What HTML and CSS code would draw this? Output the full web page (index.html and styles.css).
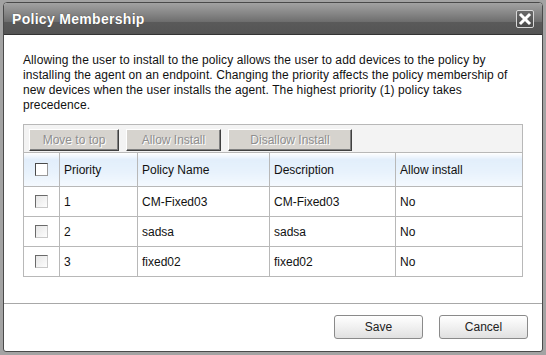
FILE: index.html
```html
<!DOCTYPE html>
<html>
<head>
<meta charset="utf-8">
<link rel="stylesheet" href="styles.css">
</head>
<body>
<div class="dialog">
  <div class="titlebar">
    <span class="title">Policy Membership</span>
    <span class="close">
      <svg width="16" height="16" viewBox="0 0 16 16"><path d="M4 4 L12 12 M12 4 L4 12" stroke="#fff" stroke-width="3" stroke-linecap="square"/></svg>
    </span>
  </div>
  <div class="content">
    <p class="intro">Allowing the user to install to the policy allows the user to add devices to the policy by installing the agent on an endpoint. Changing the priority affects the policy membership of new devices when the user installs the agent. The highest priority (1) policy takes precedence.</p>
    <div class="grid">
      <div class="toolbar">
        <button class="tbtn b1">Move to top</button>
        <button class="tbtn b2">Allow Install</button>
        <button class="tbtn b3">Disallow Install</button>
      </div>
      <table class="tbl">
        <thead>
          <tr class="head">
            <th class="c0"><span class="cb"></span></th>
            <th class="c1">Priority</th>
            <th class="c2">Policy Name</th>
            <th class="c3">Description</th>
            <th class="c4">Allow install</th>
          </tr>
        </thead>
        <tbody>
          <tr><td class="c0"><span class="cb"></span></td><td>1</td><td>CM-Fixed03</td><td>CM-Fixed03</td><td>No</td></tr>
          <tr><td class="c0"><span class="cb"></span></td><td>2</td><td>sadsa</td><td>sadsa</td><td>No</td></tr>
          <tr><td class="c0"><span class="cb"></span></td><td>3</td><td>fixed02</td><td>fixed02</td><td>No</td></tr>
        </tbody>
      </table>
    </div>
  </div>
  <div class="footer">
    <button class="fbtn">Save</button>
    <button class="fbtn">Cancel</button>
  </div>
</div>
</body>
</html>
```
FILE: styles.css
```css
html, body {
  margin: 0;
  padding: 0;
  background: #a3a3a3;
  width: 546px;
  height: 355px;
  overflow: hidden;
  font-family: "Liberation Sans", Arial, sans-serif;
}
.dialog {
  margin: 2px 0 0 3px;
  width: 538px;
  height: 348px;
  border: 1px solid #4a4a4a;
  border-radius: 4px 4px 3px 3px;
  background: #fff;
  display: flex;
  flex-direction: column;
  overflow: hidden;
}
.titlebar {
  height: 32px;
  flex: none;
  box-sizing: border-box;
  border-bottom: 1px solid #333;
  background: linear-gradient(#a2a2a2 0%, #858585 35%, #6e6e6e 60%, #5a5a5a 62%, #545454 100%);
  display: flex;
  align-items: center;
  justify-content: space-between;
  padding: 0 8px 0 8px;
}
.title {
  color: #fff;
  font-weight: bold;
  font-size: 14px;
  letter-spacing: 0.3px;
  text-shadow: 0 0 1px #333;
  margin-top: 1px;
}
.close {
  width: 16px;
  height: 16px;
  border: 1px solid #d8d8d8;
  border-radius: 2px;
  background: linear-gradient(#6a6a6a, #4a4a4a);
  display: flex;
  margin-top: 1px;
}
.content {
  flex: 1;
  padding: 18px 19px 0 19px;
}
.intro {
  margin: 0;
  font-size: 12px;
  line-height: 15px;
  letter-spacing: 0.1px;
  color: #111;
  width: 500px;
}
.grid {
  margin-top: 11px;
  width: 498px;
  border: 1px solid #b8b8b8;
}
.toolbar {
  height: 28px;
  background: #f3f3f3;
  border-bottom: 1px solid #b8b8b8;
  display: flex;
  align-items: flex-start;
  gap: 7px;
  padding: 4px 0 0 5px;
  box-sizing: border-box;
}
.tbtn {
  height: 22px;
  font-family: "Liberation Sans", Arial, sans-serif;
  font-size: 12px;
  color: #8e8e8e;
  text-shadow: 1px 1px 0 #fff;
  background: #d6d3ce;
  border: 1px solid;
  border-color: #fff #404040 #404040 #fff;
  box-shadow: inset -1px -1px 0 #808080;
  padding: 0;
}
.b1 { width: 90px; }
.b2 { width: 95px; }
.b3 { width: 124px; }
.tbl {
  border-collapse: collapse;
  width: 498px;
  font-size: 12px;
  color: #111;
}
.tbl th, .tbl td {
  border-left: 1px solid #b8b8b8;
  border-top: 1px solid #b8b8b8;
  text-align: left;
  font-weight: normal;
  padding: 0 0 0 4px;
}
.tbl tr > :first-child { border-left: none; }
.tbl thead th { border-top: none; }
.head th {
  height: 33px;
  background: linear-gradient(#ffffff 0%, #e2eefb 20%, #e8f2fc 60%, #f4f9fe 100%);
}
.tbl td { height: 29px; }
.c0 { width: 35px; text-align: center !important; padding: 0 !important; }
.c1 { width: 73px; }
.c2 { width: 127px; }
.c3 { width: 121px; }
.cb {
  display: inline-block;
  width: 11px;
  height: 11px;
  border: 1px solid;
  border-color: #6a6a6a #c8c8c8 #c8c8c8 #6a6a6a;
  background: linear-gradient(135deg, #e6e6e6, #fdfdfd);
  vertical-align: middle;
  margin-top: -1px;
}
.head .cb { background: #fff; border-color: #4a4a4a #9a9a9a #9a9a9a #4a4a4a; }
.footer {
  flex: none;
  box-sizing: border-box;
  height: 48px;
  border-top: 1px solid #a8a8a8;
  display: flex;
  justify-content: flex-end;
  align-items: flex-start;
  gap: 16px;
  padding: 11px 14px 0 0;
}
.fbtn {
  width: 89px;
  height: 24px;
  font-family: "Liberation Sans", Arial, sans-serif;
  font-size: 12px;
  color: #222;
  background: linear-gradient(#ffffff, #f2f2f2 45%, #e0e0e0);
  border: 1px solid #8a8a8a;
  border-radius: 3px;
  padding: 0;
}
```
